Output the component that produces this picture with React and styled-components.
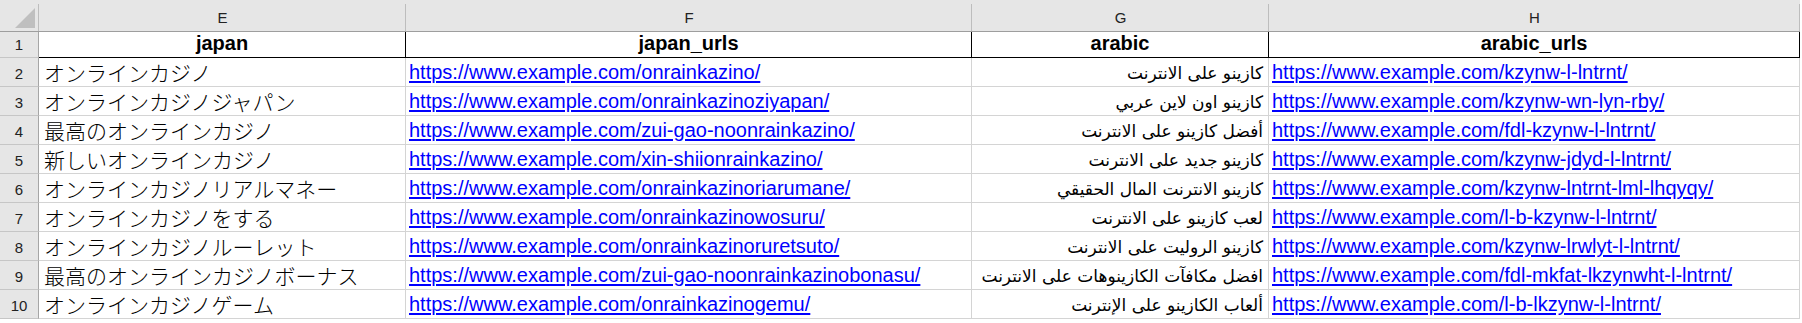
import styled, { createGlobalStyle } from "styled-components";

const GlobalStyle = createGlobalStyle`
  html, body {
    margin: 0;
    padding: 0;
    background: #ffffff;
  }
  * {
    box-sizing: border-box;
  }
`;

const Sheet = styled.div`
  display: grid;
  grid-template-columns: 39px 367px 566px 297px 531px;
  grid-auto-rows: 29px;
  width: 1802px;
  background: #ffffff;
  font-family: "Liberation Sans", Arial, sans-serif;
`;

const ColHead = styled.div`
  height: 32px;
  background: #e6e6e6;
  border-bottom: 1px solid #9e9e9e;
  position: relative;
  display: flex;
  align-items: center;
  justify-content: center;
  padding-top: 4px;
  font-size: 15px;
  color: #222;

  &::after {
    content: "";
    position: absolute;
    right: 0;
    top: 4px;
    bottom: 0;
    width: 1px;
    background: #bdbdbd;
  }
`;

const Corner = styled(ColHead)`
  svg {
    position: absolute;
    left: 15px;
    top: 8px;
  }
`;

const RowHead = styled.div`
  background: #e6e6e6;
  border-right: 1px solid #a6a6a6;
  border-bottom: 1px solid #c6c6c6;
  display: flex;
  align-items: center;
  justify-content: center;
  padding-top: 2px;
  font-size: 15px;
  color: #222;
`;

const HeadCell = styled.div`
  border-right: 1px solid #000;
  border-bottom: 1px solid #000;
  text-align: center;
  font-weight: 700;
  font-size: 20px;
  line-height: 28px;
  color: #000;
  white-space: nowrap;
`;

const Cell = styled.div`
  border-right: 1px solid #d4d4d4;
  border-bottom: 1px solid #d4d4d4;
  padding: 0 ${(p) => (p.$rtl ? "5px" : "3px")};
  font-size: 20px;
  line-height: 28px;
  white-space: nowrap;
  overflow: hidden;
  color: #000;
  text-align: ${(p) => (p.$rtl ? "right" : "left")};
`;

const JpText = styled.span`
  font-family: "Noto Sans CJK JP", sans-serif;
  font-size: 21px;
  font-weight: 300;
  padding-left: 2px;
`;

const ArText = styled.span`
  font-family: "DejaVu Sans", sans-serif;
  font-size: 17px;
  direction: rtl;
  unicode-bidi: embed;
`;

const Link = styled.span`
  color: #0000ff;
  text-decoration: underline;
  text-underline-offset: 2px;
`;

const rows = [
  ["オンラインカジノ", "onrainkazino", "كازينو على الانترنت", "kzynw-l-lntrnt"],
  ["オンラインカジノジャパン", "onrainkazinoziyapan", "كازينو اون لاين عربي", "kzynw-wn-lyn-rby"],
  ["最高のオンラインカジノ", "zui-gao-noonrainkazino", "أفضل كازينو على الانترنت", "fdl-kzynw-l-lntrnt"],
  ["新しいオンラインカジノ", "xin-shiionrainkazino", "كازينو جديد على الانترنت", "kzynw-jdyd-l-lntrnt"],
  ["オンラインカジノリアルマネー", "onrainkazinoriarumane", "كازينو الانترنت المال الحقيقي", "kzynw-lntrnt-lml-lhqyqy"],
  ["オンラインカジノをする", "onrainkazinowosuru", "لعب كازينو على الانترنت", "l-b-kzynw-l-lntrnt"],
  ["オンラインカジノルーレット", "onrainkazinoruretsuto", "كازينو الروليت على الانترنت", "kzynw-lrwlyt-l-lntrnt"],
  ["最高のオンラインカジノボーナス", "zui-gao-noonrainkazinobonasu", "افضل مكافآت الكازينوهات على الانترنت", "fdl-mkfat-lkzynwht-l-lntrnt"],
  ["オンラインカジノゲーム", "onrainkazinogemu", "ألعاب الكازينو على الإنترنت", "l-b-lkzynw-l-lntrnt"],
];

const url = (slug) => `https://www.example.com/${slug}/`;

export default function App() {
  return (
    <>
      <GlobalStyle />
      <Sheet>
        <Corner>
          <svg width="20" height="20" viewBox="0 0 20 20">
            <polygon points="20,0 20,20 0,20" fill="#bfbfbf" />
          </svg>
        </Corner>
        {["E", "F", "G", "H"].map((c) => (
          <ColHead key={c}>{c}</ColHead>
        ))}

        <RowHead>1</RowHead>
        <HeadCell>japan</HeadCell>
        <HeadCell>japan_urls</HeadCell>
        <HeadCell>arabic</HeadCell>
        <HeadCell>arabic_urls</HeadCell>

        {rows.map(([jp, jpSlug, ar, arSlug], i) => (
          <Row key={i} n={i + 2} jp={jp} jpSlug={jpSlug} ar={ar} arSlug={arSlug} />
        ))}
      </Sheet>
    </>
  );
}

function Row({ n, jp, jpSlug, ar, arSlug }) {
  return (
    <>
      <RowHead>{n}</RowHead>
      <Cell>
        <JpText>{jp}</JpText>
      </Cell>
      <Cell>
        <Link>{url(jpSlug)}</Link>
      </Cell>
      <Cell $rtl>
        <ArText>{ar}</ArText>
      </Cell>
      <Cell>
        <Link>{url(arSlug)}</Link>
      </Cell>
    </>
  );
}
